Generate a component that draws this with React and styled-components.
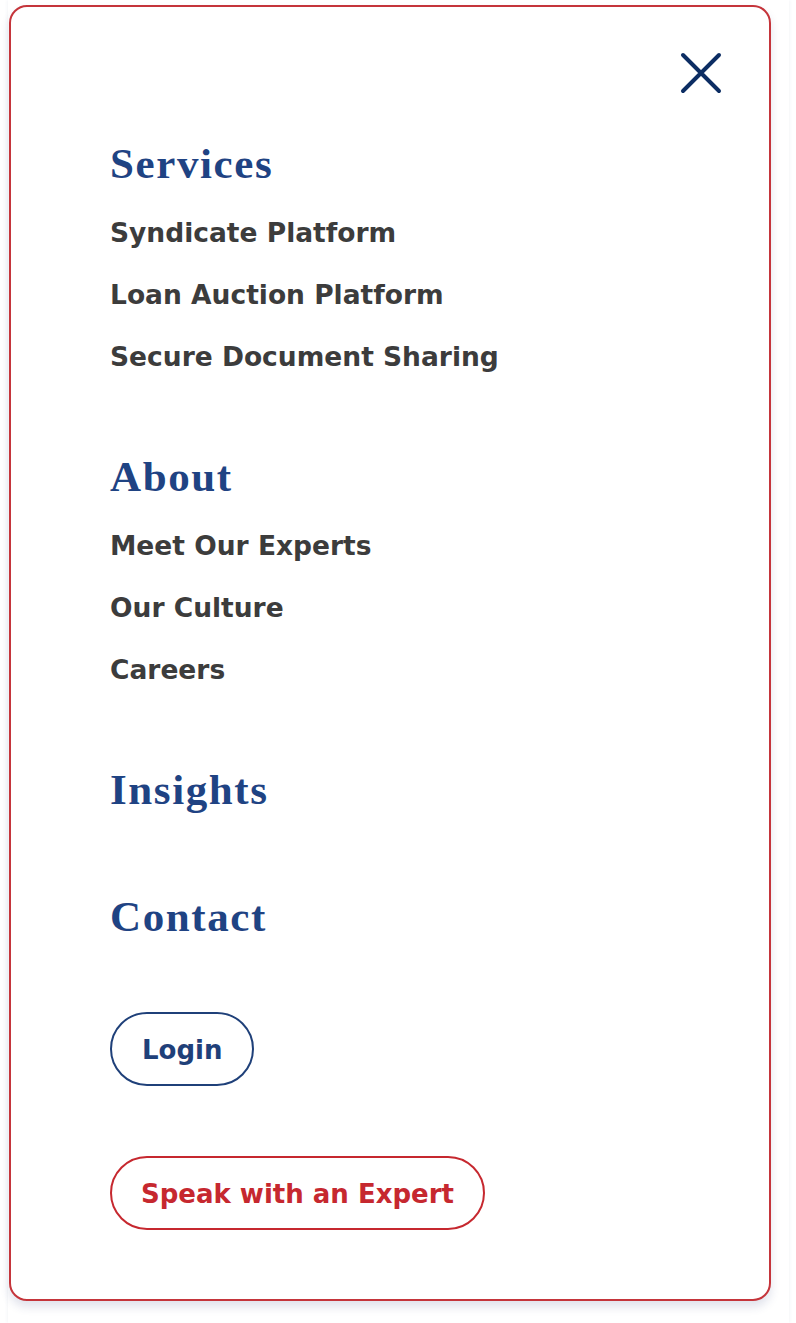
import React from "react";
import styled, { createGlobalStyle } from "styled-components";

const GlobalStyle = createGlobalStyle`
  html, body {
    margin: 0;
    padding: 0;
    background: #ffffff;
  }
  body {
    font-family: "DejaVu Sans", "Liberation Sans", sans-serif;
  }
  * { box-sizing: border-box; }
`;

const Backdrop = styled.div`
  width: 796px;
  min-height: 1323px;
  padding: 0 7px 0 8px;
  background: #ffffff;
`;

const Panel = styled.div`
  min-height: 1323px;
  padding: 5px 16px 0 1px;
  background: #ffffff;
  box-shadow: 0 0 4px rgba(40, 60, 120, 0.08);
`;

const Card = styled.nav`
  width: 762px;
  height: 1296px;
  border: 2px solid #c5353b;
  border-radius: 18px;
  background: #ffffff;
  box-shadow: 0 6px 10px rgba(40, 60, 120, 0.14);
  display: flex;
  flex-direction: column;
  padding: 44px 48px 0 99px;
`;

const TopBar = styled.div`
  display: flex;
  justify-content: flex-end;
`;

const CloseButton = styled.button`
  width: 44px;
  height: 44px;
  padding: 0;
  border: none;
  background: none;
  cursor: pointer;
  display: flex;
  margin-right: -2px;
`;

const Menu = styled.div`
  display: flex;
  flex-direction: column;
  margin-top: 44px;
`;

const Section = styled.section`
  display: flex;
  flex-direction: column;
  margin-top: ${(p) => (p.$first ? 0 : p.$gap)}px;
`;

const Heading = styled.a`
  font-family: "Liberation Serif", "DejaVu Serif", serif;
  font-weight: 700;
  font-size: 43px;
  line-height: 50px;
  height: 50px;
  margin-bottom: 11px;
  letter-spacing: 1.6px;
  color: #1f4383;
  text-decoration: none;
`;

const LinkList = styled.ul`
  list-style: none;
  margin: 2px 0 0;
  padding: 0;
`;

const LinkItem = styled.li`
  height: 62px;
  line-height: 62px;
  font-family: "DejaVu Sans", "Liberation Sans", sans-serif;
  font-weight: 700;
  font-size: 26.5px;
  color: #3c3c3c;
`;

const Actions = styled.div`
  display: flex;
  flex-direction: column;
  align-items: flex-start;
  gap: 70px;
  margin-top: 59px;
`;

const PillButton = styled.a`
  display: inline-flex;
  align-items: center;
  justify-content: center;
  height: 74px;
  padding: 2px ${(p) => p.$pad}px 0;
  border: 2.5px solid ${(p) => p.$color};
  border-radius: 37px;
  color: ${(p) => p.$color};
  font-family: "DejaVu Sans", "Liberation Sans", sans-serif;
  font-weight: 700;
  font-size: 26px;
  text-decoration: none;
  white-space: nowrap;
`;

const sections = [
  {
    title: "Services",
    links: ["Syndicate Platform", "Loan Auction Platform", "Secure Document Sharing"],
    gap: 0,
  },
  {
    title: "About",
    links: ["Meet Our Experts", "Our Culture", "Careers"],
    gap: 64,
  },
  { title: "Insights", links: [], gap: 64 },
  { title: "Contact", links: [], gap: 66 },
];

export default function App() {
  return (
    <>
      <GlobalStyle />
      <Backdrop>
        <Panel>
          <Card>
            <TopBar>
              <CloseButton aria-label="Close menu">
                <svg width="44" height="44" viewBox="0 0 44 44">
                  <path
                    d="M4 4 L40 40 M40 4 L4 40"
                    stroke="#0c2d63"
                    strokeWidth="4"
                    strokeLinecap="round"
                    fill="none"
                  />
                </svg>
              </CloseButton>
            </TopBar>
            <Menu>
              {sections.map((s, i) => (
                <Section key={s.title} $first={i === 0} $gap={s.gap}>
                  <Heading href="#">{s.title}</Heading>
                  {s.links.length > 0 && (
                    <LinkList>
                      {s.links.map((l) => (
                        <LinkItem key={l}>{l}</LinkItem>
                      ))}
                    </LinkList>
                  )}
                </Section>
              ))}
            </Menu>
            <Actions>
              <PillButton href="#" $color="#1f4079" $pad={30}>
                Login
              </PillButton>
              <PillButton href="#" $color="#c6282f" $pad={29}>
                Speak with an Expert
              </PillButton>
            </Actions>
          </Card>
        </Panel>
      </Backdrop>
    </>
  );
}
